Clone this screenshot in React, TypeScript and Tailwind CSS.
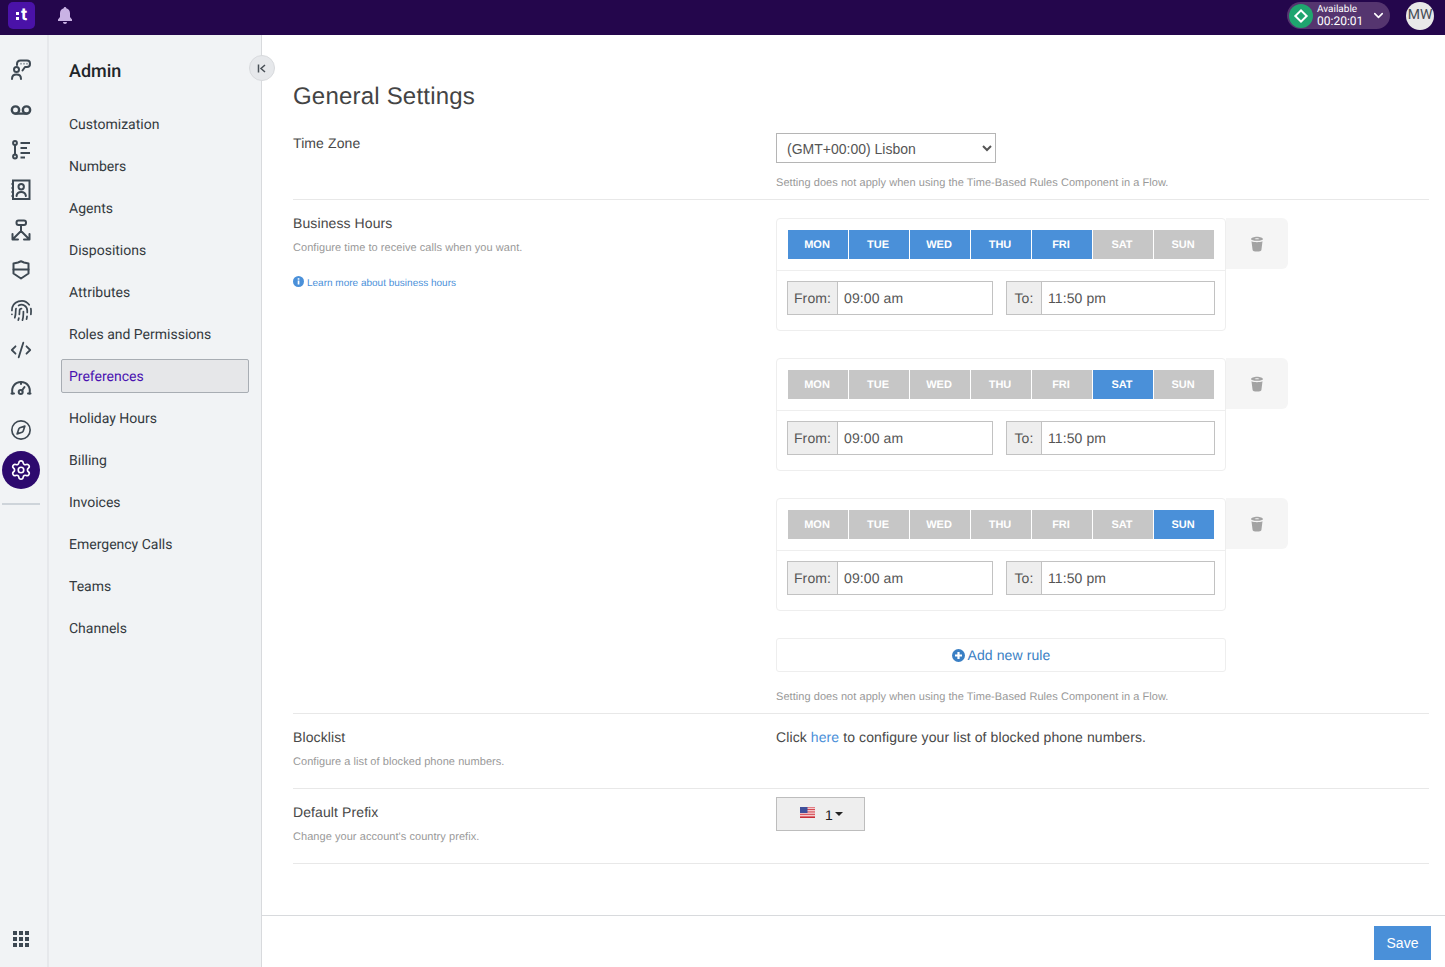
import React from "react";
import { Voicemail, Fingerprint, CodeXml, Compass, Settings, ChevronDown } from "lucide-react";

const stroke = "#3d4852";
const Svg = ({ children, box = "0 0 22 22" }: { children: React.ReactNode; box?: string }) => (
  <svg width="22" height="22" viewBox={box} fill="none" stroke={stroke} strokeWidth="2" strokeLinecap="round" strokeLinejoin="round">
    {children}
  </svg>
);

const AgentIcon = () => (
  <Svg>
    <circle cx="6.500" cy="10.500" r="2.500" />
    <path d="M2 20c0-3 2-4.400 4.500-4.400S11 17 11 20" />
    <path d="M7 6V5c0-2.200 1.500-3.500 3.500-3.500H17c1.800 0 3 1.300 3 3.200S18.800 8 17 8h-2l-2.500 3.500" />
    <path d="M11 4.700h.01M14 4.700h.01M17 4.700h.01" stroke="#9aa3ab" />
  </Svg>
);
const ListIcon = () => (
  <Svg>
    <circle cx="5" cy="4" r="1.900" />
    <circle cx="5" cy="17.500" r="1.900" />
    <path d="M5 6v9.500" />
    <path d="M10.500 4h9.500M10.500 9h6.500M10.500 14h9.500M10.500 18.500h4.500" strokeLinecap="butt" />
  </Svg>
);
const ContactIcon = () => (
  <Svg>
    <rect x="3" y="1.500" width="16.500" height="18.500" strokeLinejoin="miter" />
    <circle cx="11.200" cy="7.800" r="2.700" />
    <path d="M6.500 17c.4-3 2.300-4 4.700-4s4.300 1 4.700 4" />
    <path d="M1.500 5h2.500M1.500 9h2.500M1.500 13h2.500M1.500 17h2.500" strokeLinecap="butt" />
  </Svg>
);
const FlowIcon = () => (
  <Svg>
    <rect x="6.500" y="1.500" width="9.500" height="4.500" rx="2" />
    <path d="M11 6v6l-8 8M11 12l8 8M2.500 15v5.500H8M19.500 15v5.500H14" />
  </Svg>
);
const ShieldIcon = () => (
  <Svg>
    <path d="M3.500 4.500 8 3.500l3-1.200 3 1.200 4.500 1V14.500L11 19.500l-7.500-5z" />
    <path d="M3.500 10.500h15" />
  </Svg>
);
const GaugeIcon = () => (
  <Svg box="0 3 22 22">
    <path d="M2.500 17.500C1 11 5 6 11 6s10 5 8.500 11.500" />
    <path d="M1.500 17.500H4M18 17.500h2.500M11 6v2" />
    <circle cx="10.700" cy="16" r="2" />
    <path d="M12 14.500l2.500-3.500" />
  </Svg>
);

const rail = [
  <AgentIcon />,
  <Voicemail size={22} color={stroke} strokeWidth={2.6} />,
  <ListIcon />,
  <ContactIcon />,
  <FlowIcon />,
  <ShieldIcon />,
  <Fingerprint size={23} color={stroke} strokeWidth={1.8} />,
  <CodeXml size={22} color={stroke} strokeWidth={2} />,
  <GaugeIcon />,
  <Compass size={22} color={stroke} strokeWidth={1.8} />,
];

const navItems = ["Customization", "Numbers", "Agents", "Dispositions", "Attributes", "Roles and Permissions", "Preferences", "Holiday Hours", "Billing", "Invoices", "Emergency Calls", "Teams", "Channels"];
const days = ["MON", "TUE", "WED", "THU", "FRI", "SAT", "SUN"];

const Trash = () => (
  <svg width="14" height="16" viewBox="0 0 14 16" fill="#a3a3a3">
    <path d="M1 3.200C1 1.800 4 .8 7 .8s6 1 6 2.400c0 .8-2.600 1.500-6 1.500S1 4 1 3.200zM4.600 2.900c1.400.5 3.400.5 4.800 0C8.800 2 5.200 2 4.600 2.900z" />
    <path d="M1.500 5.300C3 6 5 6.200 7 6.200s4-.2 5.500-.9L11.400 14c-.1 1-2.100 1.600-4.400 1.600S2.700 15 2.600 14z" />
  </svg>
);

function Rule({ active }: { active: string[] }) {
  return (
    <div className="flex items-start">
      <div className="w-[450px] h-[113px] rounded-[4px] border border-[#eeeeee] bg-white shrink-0">
        <div className="h-[52px] pl-[11px] pt-[11px] border-b border-[#eeeeee]">
          <div className="flex gap-px">
            {days.map((d) => (
              <div key={d} className={`w-[60px] h-[29px] pr-[2px] pt-px flex items-center justify-center text-[11px] font-bold text-white ${active.includes(d) ? "bg-[#4a90d9]" : "bg-[#c6c6c6]"}`}>
                {d}
              </div>
            ))}
          </div>
        </div>
        <div className="flex pl-[10px] pt-[10px] gap-[13px]">
          <TimeInput label="From:" labelW="w-[50px]" w="w-[206px]" value="09:00 am" />
          <TimeInput label="To:" labelW="w-[35px]" w="w-[209px]" value="11:50 pm" />
        </div>
      </div>
      <div className="w-[62px] h-[51px] bg-[#f5f5f5] rounded-r-[6px] flex items-center justify-center">
        <Trash />
      </div>
    </div>
  );
}

function TimeInput({ label, labelW, w, value }: { label: string; labelW: string; w: string; value: string }) {
  return (
    <div className={`flex h-[34px] border border-[#c2c2c2] text-[14px] tracking-[0.1px] text-[#555555] ${w}`}>
      <div className={`${labelW} shrink-0 bg-[#eeeeee] border-r border-[#c2c2c2] flex items-center justify-center`}>{label}</div>
      <div className="flex-1 bg-white pl-[6px] flex items-center">{value}</div>
    </div>
  );
}

const Flag = () => (
  <svg width="15" height="11" viewBox="0 0 15 11">
    <rect width="15" height="11" fill="#fff" />
    <path d="M0 .8h15M0 2.500h15M0 4.200h15M0 5.900h15M0 7.600h15M0 9.300h15" stroke="#d0353f" strokeWidth="0.9" />
    <rect y="10" width="15" height="1" fill="#c62f38" />
    <rect width="7.500" height="6" fill="#3f4f9a" />
  </svg>
);

export default function App() {
  return (
    <div className="w-[1445px] h-[967px] overflow-hidden flex flex-col bg-white [text-rendering:geometricPrecision]" style={{ fontFamily: '"Liberation Sans", Arial, sans-serif' }}>
      <header className="h-[35px] shrink-0 bg-[#24064c] flex items-center pl-[8px] pr-[11px] pb-[4px]">
        <div className="relative w-[27px] h-[27px] rounded-[5px] bg-[#4a12a8] flex items-center justify-center gap-[2px] text-white">
          <span className="flex flex-col gap-[2px]">
            <span className="w-[3px] h-[3px] bg-white" />
            <span className="w-[3px] h-[3px] bg-white" />
          </span>
          <span className="text-[17px] font-bold leading-none" style={{ fontFamily: "Inter, sans-serif" }}>t</span>
        </div>
        <svg className="ml-[22px]" width="16" height="17" viewBox="0 0 16 17" fill="#c9b2e4">
          <path d="M8 0c.8 0 1.300.6 1.300 1.300 2.300.6 3.700 2.500 3.700 5V10l2 2.500V14H1v-1.500L3 10V6.300c0-2.500 1.400-4.400 3.700-5C6.700.6 7.200 0 8 0z" />
          <path d="M6 15h4c0 1-.9 2-2 2s-2-1-2-2z" />
        </svg>
        <div className="ml-auto flex items-center">
          <div className="w-[103px] h-[27px] rounded-full bg-[#55356f] flex items-center pl-[2px] text-white">
            <div className="w-[24px] h-[24px] rounded-full bg-[#1fa56f] flex items-center justify-center">
              <div className="w-[10px] h-[10px] border-2 border-white rotate-45" />
            </div>
            <div className="ml-[4px] flex flex-col" style={{ fontFamily: "Roboto, sans-serif" }}>
              <span className="text-[10px] leading-[11px]">Available</span>
              <span className="text-[12px] leading-[13px]">00:20:01</span>
            </div>
            <ChevronDown size={15} strokeWidth={2.5} className="ml-[8px]" />
          </div>
          <div className="ml-[16px] w-[28px] h-[28px] rounded-full bg-[#e8e8e8] flex items-center justify-center text-[14px] text-[#444c54]" style={{ fontFamily: "Roboto, sans-serif" }}>MW</div>
        </div>
      </header>

      <div className="flex-1 flex min-h-0">
        <aside className="w-[49px] shrink-0 bg-[#f1f3f5] border-r-2 border-[#e6e8eb] flex flex-col">
          <div className="w-[42px] flex flex-col items-center pt-[15px]">
            {rail.map((icon, i) => (
              <div key={i} className="w-[42px] h-[40px] flex items-center justify-center">{icon}</div>
            ))}
            <div className="w-[38px] h-[38px] mt-px rounded-full bg-[#2d0a6e] flex items-center justify-center">
              <Settings size={22} color="#ffffff" strokeWidth={1.8} />
            </div>
            <div className="w-[38px] h-[2px] mt-[14px] bg-[#ced4da]" />
          </div>
          <div className="mt-auto w-[42px] pb-[20px] flex justify-center">
            <div className="grid grid-cols-3 gap-[2px]">
              {Array.from({ length: 9 }).map((_, i) => (
                <div key={i} className="w-[4px] h-[4px] bg-[#3d4852]" />
              ))}
            </div>
          </div>
        </aside>

        <nav className="relative w-[213px] shrink-0 bg-[#f1f3f5] border-r border-[#d8dadd]" style={{ fontFamily: "Roboto, sans-serif" }}>
          <div className="pl-[20px] pt-[26px] text-[18px] font-medium leading-[22px] text-[#212529]">Admin</div>
          <div className="mt-[24px] pl-[12px] pr-[12px] flex flex-col">
            {navItems.map((n) => (
              <div key={n} className={`h-[34px] mb-[8px] pl-[7px] pt-[2px] flex items-center text-[14px] rounded-[2px] border ${n === "Preferences" ? "bg-[#e6e7e9] border-[#a8adb3] text-[#4a12b0]" : "border-transparent text-[#343a40]"}`}>
                {n}
              </div>
            ))}
          </div>
          <div className="absolute top-[20px] -right-[14px] w-[26px] h-[26px] rounded-full bg-[#e6e8eb] border border-[#d8dadd] flex items-center justify-center z-10">
            <svg width="10" height="9" viewBox="0 0 10 9" fill="none" stroke="#495057" strokeWidth="1.500"><path d="M1.500 .5v8M8 1L4 4.500 8 8" /></svg>
          </div>
        </nav>

        <main className="flex-1 min-w-0 flex flex-col">
          <div className="flex-1 min-h-0 pl-[31px] pr-[16px] text-[#484848]">
            <h1 className="pt-[47px] h-[98px] text-[24px] leading-[29px] tracking-[0.2px] text-[#444444]">General Settings</h1>

            <section className="h-[67px] flex border-b border-[#e8e8e8]">
              <div className="w-[483px] text-[14px] leading-[20px] tracking-[0.1px]">Time Zone</div>
              <div>
                <select defaultValue="l" className="block w-[220px] h-[30px] border border-[#b5b5b5] bg-white pl-[6px] pt-[2px] text-[14px] text-[#555555]" style={{ appearance: "auto" }}>
                  <option value="l">(GMT+00:00) Lisbon</option>
                </select>
                <p className="mt-[13px] text-[11px] leading-[14px] tracking-[0.055px] text-[#999999]">Setting does not apply when using the Time-Based Rules Component in a Flow.</p>
              </div>
            </section>

            <section className="flex border-b border-[#e8e8e8] pt-[18px] h-[514px]">
              <div className="w-[483px]">
                <div className="-mt-[1px] text-[14px] leading-[12px] tracking-[0.1px]">Business Hours</div>
                <p className="mt-[12px] text-[11px] leading-[14px] tracking-[0.055px] text-[#999999]">Configure time to receive calls when you want.</p>
                <div className="mt-[23px] flex items-center gap-[3px] text-[10px] text-[#4a90d9] leading-[12px]">
                  <svg className="-translate-y-[3px]" width="11" height="11" viewBox="0 0 11 11"><circle cx="5.500" cy="5.500" r="5.500" fill="#4a90d9" /><rect x="4.700" y="4.500" width="1.700" height="4" fill="#fff" /><rect x="4.700" y="2.200" width="1.700" height="1.500" fill="#fff" /></svg>
                  <span>Learn more about business hours</span>
                </div>
              </div>
              <div>
                <div className="flex flex-col gap-[27px]">
                  <Rule active={["MON", "TUE", "WED", "THU", "FRI"]} />
                  <Rule active={["SAT"]} />
                  <Rule active={["SUN"]} />
                </div>
                <div className="mt-[27px] w-[450px] h-[34px] border border-[#eeeeee] rounded-[3px] flex items-center justify-center gap-[3px] text-[14px] tracking-[0.1px] text-[#3a7fc4]">
                  <svg width="13" height="13" viewBox="0 0 13 13"><circle cx="6.500" cy="6.500" r="6.500" fill="#3a7fc4" /><path d="M6.500 3v7M3 6.500h7" stroke="#fff" strokeWidth="2.200" /></svg>
                  <span>Add new rule</span>
                </div>
                <p className="mt-[18px] text-[11px] leading-[14px] tracking-[0.055px] text-[#999999]">Setting does not apply when using the Time-Based Rules Component in a Flow.</p>
              </div>
            </section>

            <section className="h-[75px] flex border-b border-[#e8e8e8] pt-[14px]">
              <div className="w-[483px]">
                <div className="text-[14px] leading-[18px] tracking-[0.1px]">Blocklist</div>
                <p className="mt-[9px] text-[11px] leading-[14px] tracking-[0.055px] text-[#999999]">Configure a list of blocked phone numbers.</p>
              </div>
              <div className="text-[14px] leading-[18px] tracking-[0.1px]">Click <span className="text-[#4a90d9]">here</span> to configure your list of blocked phone numbers.</div>
            </section>

            <section className="h-[75px] flex border-b border-[#e8e8e8]">
              <div className="w-[483px] pt-[14px]">
                <div className="text-[14px] leading-[18px] tracking-[0.1px]">Default Prefix</div>
                <p className="mt-[9px] text-[11px] leading-[14px] tracking-[0.055px] text-[#999999]">Change your account's country prefix.</p>
              </div>
              <div className="pt-[8px]">
                <div className="w-[89px] h-[34px] bg-[#eeeeee] border border-[#bdbdbd] flex items-center pl-[23px] text-[14px] text-[#222222]">
                  <span className="-mt-[4px]"><Flag /></span>
                  <span className="ml-[10px] mt-[2px]">1</span>
                  <span className="ml-[2px] -mt-[1px] w-0 h-0 border-l-[4px] border-r-[4px] border-t-[4px] border-l-transparent border-r-transparent border-t-[#222222]" />
                </div>
              </div>
            </section>
          </div>
          <footer className="h-[52px] shrink-0 border-t border-[#d8dadd] flex items-start justify-end pt-[10px] pr-[14px]">
            <button className="w-[57px] h-[34px] bg-[#4a90d9] text-white text-[14px]">Save</button>
          </footer>
        </main>
      </div>
    </div>
  );
}
